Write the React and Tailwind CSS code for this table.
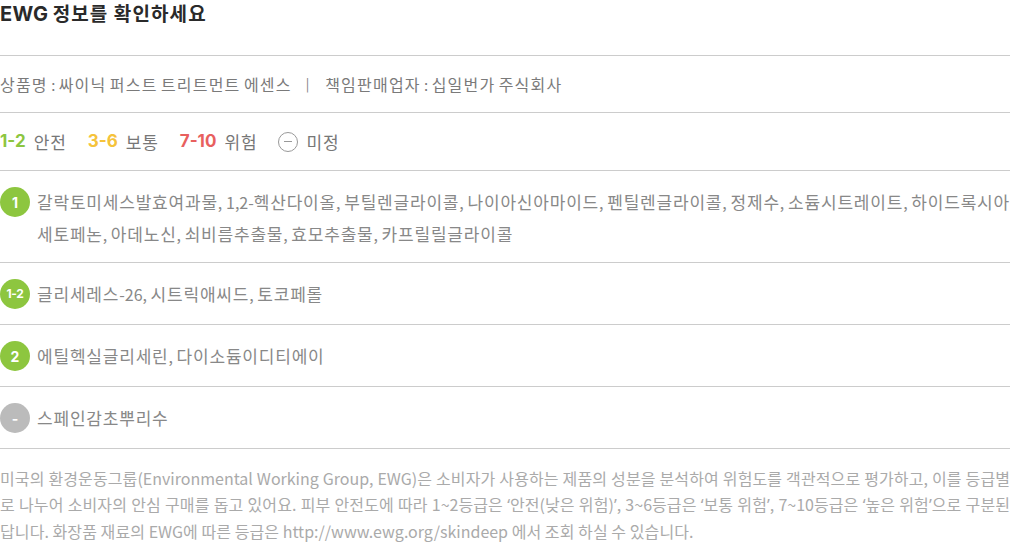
import React from 'react';

const kr = { fontFamily: '"Noto Sans CJK KR", "Noto Sans", sans-serif' };
const num = { fontFamily: 'Inter, "Noto Sans", sans-serif' };
const latin = { fontFamily: '"Noto Sans", sans-serif' };

// 한글 구간만 크기와 자간을 따로 줘서 원본 폰트의 폭에 맞춘다
// 따옴표는 CJK 폰트에서 전각으로 나오므로 라틴 폰트로 찍는다
const Ko = ({ text, cls }) =>
    text.split(/([\uAC00-\uD7A3]+|[‘’])/).map((part, i) => {
        if (/[\uAC00-\uD7A3]/.test(part)) return <span key={i} className={cls}>{part}</span>;
        if (part === '‘' || part === '’') return <span key={i} style={latin}>{part}</span>;
        return part;
    });

const rows = [
    { grade: '1', color: 'bg-[#8dc63f]', small: false, text: '갈락토미세스발효여과물, 1,2-헥산다이올, 부틸렌글라이콜, 나이아신아마이드, 펜틸렌글라이콜, 정제수, 소듐시트레이트, 하이드록시아세토페논, 아데노신, 쇠비름추출물, 효모추출물, 카프릴릴글라이콜' },
    { grade: '1-2', color: 'bg-[#8dc63f]', small: true, text: '글리세레스-26, 시트릭애씨드, 토코페롤' },
    { grade: '2', color: 'bg-[#8dc63f]', small: false, text: '에틸헥실글리세린, 다이소듐이디티에이' },
    { grade: '-', color: 'bg-[#bbbbbb]', small: false, text: '스페인감초뿌리수' },
];

const App = () => {
    return (
        <div className="w-[1010px] h-[544px] bg-white overflow-hidden" style={kr}>
            {/* 제목 */}
            <div className="h-[56px] border-b border-[#cccccc]">
                <h2 className="text-[19px] leading-[26px] font-bold text-[#2a2a2a]">
                    <span className="text-[20px] tracking-[0.3px]" style={num}>EWG</span>{' '}
                    <span className="tracking-[1.1px]">정보를 확인하세요</span>
                </h2>
            </div>

            {/* 제품 정보 */}
            <div className="h-[57px] border-b border-[#cccccc] flex items-center text-[15px] text-[#7a7a7a]">
                <span><Ko text="상품명 : 싸이닉 퍼스트 트리트먼트 에센스" cls="text-[16px] tracking-[1.2px]" /></span>
                <span className="ml-[14px] mr-[16px] text-[13px]">|</span>
                <span><Ko text="책임판매업자 : 십일번가 주식회사" cls="text-[16px] tracking-[1.2px]" /></span>
            </div>

            {/* 등급 범례 */}
            <div className="h-[58px] border-b border-[#cccccc] flex items-center text-[17px] text-[#777777]">
                <span className="font-bold text-[#8dc63f] mr-[8px]" style={num}>1-2</span>
                <span className="tracking-[0.9px] mr-[21px]">안전</span>
                <span className="font-bold text-[#f5c33b] mr-[8px]" style={num}>3-6</span>
                <span className="tracking-[0.9px] mr-[21px]">보통</span>
                <span className="font-bold text-[#e8605e] mr-[8px]" style={num}>7-10</span>
                <span className="tracking-[0.9px] mr-[20px]">위험</span>
                <span className="w-[20px] h-[20px] rounded-full border-[1.5px] border-[#999999] flex items-center justify-center mr-[9px]">
                    <span className="w-[8px] h-[1.5px] bg-[#999999]"></span>
                </span>
                <span className="tracking-[0.9px]">미정</span>
            </div>

            {/* 성분 목록 */}
            {rows.map((row, i) => (
                <div key={i} className={`flex items-start border-b border-[#cccccc] pt-[15px] ${i === 0 ? 'pb-[12px]' : 'pb-[14px]'}`}>
                    <div className={`shrink-0 w-[30px] h-[30px] mt-[1px] rounded-full ${row.color} text-white font-bold flex items-center justify-center ${row.small ? 'text-[12px] tracking-[-0.3px]' : 'text-[14px]'}`} style={num}>
                        {row.grade}
                    </div>
                    <p className="ml-[7px] text-[16px] leading-[32px] text-[#888888] text-justify">
                        <Ko text={row.text} cls="text-[17px] tracking-[0.8px]" />
                    </p>
                </div>
            ))}

            {/* 설명 */}
            <p className="pt-[16px] text-[16px] leading-[26px] text-[#aaaaaa] text-justify">
                <Ko
                    text="미국의 환경운동그룹(Environmental Working Group, EWG)은 소비자가 사용하는 제품의 성분을 분석하여 위험도를 객관적으로 평가하고, 이를 등급별로 나누어 소비자의 안심 구매를 돕고 있어요. 피부 안전도에 따라 1~2등급은 ‘안전(낮은 위험)’, 3~6등급은 ‘보통 위험’, 7~10등급은 ‘높은 위험’으로 구분된답니다. 화장품 재료의 EWG에 따른 등급은 http://www.ewg.org/skindeep 에서 조회 하실 수 있습니다."
                    cls="tracking-[0.1px]"
                />
            </p>
        </div>
    );
};

export default App;
